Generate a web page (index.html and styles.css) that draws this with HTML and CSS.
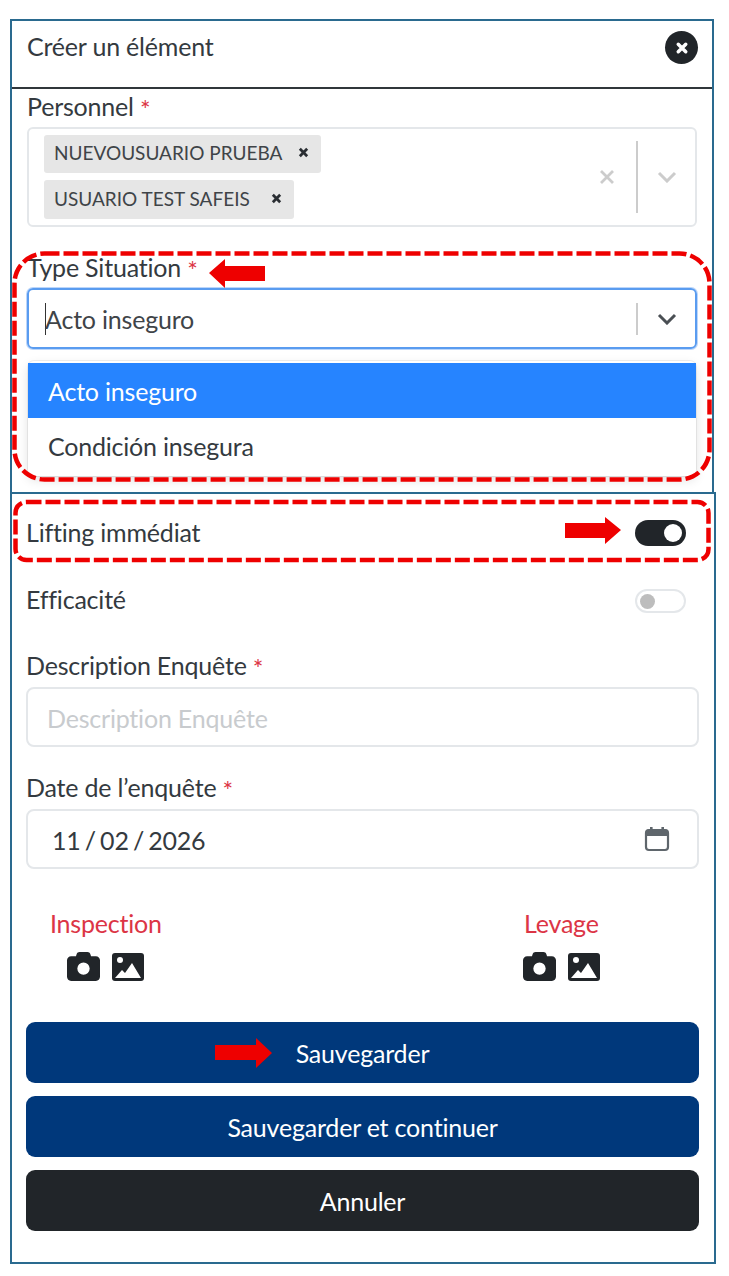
FILE: index.html
```html
<!DOCTYPE html>
<html lang="fr">
<head>
<meta charset="utf-8">
<title>Créer un élément</title>
<link rel="stylesheet" href="styles.css">
</head>
<body>
<div class="page">
  <section class="panel-top">
    <header class="modal-head">
      <h1 class="modal-title">Créer un élément</h1>
      <span class="close-btn"><svg viewBox="0 0 16 16" class="close-x"><path d="M5 5l6 6M11 5l-6 6"/></svg></span>
    </header>
    <label class="label label-first">Personnel <span class="req">*</span></label>
    <div class="multi">
      <div class="chips">
        <span class="chip">NUEVOUSUARIO PRUEBA <svg viewBox="0 0 12 12" class="chip-x"><path d="M2 2l8 8M10 2l-8 8"/></svg></span>
        <span class="chip chip-second">USUARIO TEST SAFEIS <svg viewBox="0 0 12 12" class="chip-x"><path d="M2 2l8 8M10 2l-8 8"/></svg></span>
      </div>
      <svg viewBox="0 0 16 16" class="clear-x"><path d="M2 2l12 12M14 2L2 14"/></svg>
      <span class="sep sep-tall"></span>
      <svg viewBox="0 0 20 12" class="chev chev-light"><path d="M2 2l8 8 8-8"/></svg>
    </div>
    <label class="label label-type">Type Situation <span class="req">*</span></label>
    <div class="select-focus">
      <span class="caret"></span><span class="select-value">Acto inseguro</span>
      <span class="sep sep-short"></span>
      <svg viewBox="0 0 20 12" class="chev chev-dark"><path d="M2 2l8 8 8-8"/></svg>
    </div>
    <div class="menu">
      <div class="opt opt-active">Acto inseguro</div>
      <div class="opt">Condición insegura</div>
    </div>
  </section>

  <section class="panel-bottom">
    <div class="switch-row switch-row-first">
      <span class="switch-label">Lifting immédiat</span>
      <span class="switch switch-on"><span class="knob knob-on"></span></span>
    </div>
    <div class="switch-row switch-row-second">
      <span class="switch-label">Efficacité</span>
      <span class="switch switch-off"><span class="knob knob-off"></span></span>
    </div>
    <label class="label label-desc">Description Enquête <span class="req">*</span></label>
    <div class="input"><span class="placeholder">Description Enquête</span></div>
    <label class="label label-date">Date de l’enquête <span class="req">*</span></label>
    <div class="input input-date">
      <span class="date-value">11 / 02 / 2026</span>
      <svg viewBox="0 0 26 26" class="cal">
        <rect x="2" y="4" width="22" height="20" rx="3" fill="none" stroke="#5f666c" stroke-width="2.2"/>
        <path d="M2 5.5a2 2 0 0 1 2-2h18a2 2 0 0 1 2 2V10H2z" fill="#5f666c"/>
        <rect x="6" y="1" width="2.6" height="5" fill="#5f666c"/>
        <rect x="17.4" y="1" width="2.6" height="5" fill="#5f666c"/>
      </svg>
    </div>
    <div class="uploads">
      <div class="upload upload-left">
        <div class="upload-title">Inspection</div>
        <div class="upload-icons upload-icons-left">
          <svg viewBox="0 0 512 512" class="ico-cam"><path d="M149.1 64.8L138.7 96H64C28.7 96 0 124.7 0 160V416c0 35.3 28.7 64 64 64H448c35.3 0 64-28.7 64-64V160c0-35.3-28.7-64-64-64H373.3L362.9 64.8C356.4 45.2 338.1 32 317.4 32H194.6c-20.7 0-39 13.2-45.5 32.8zM256 192a96 96 0 1 1 0 192 96 96 0 1 1 0-192z"/></svg>
          <svg viewBox="0 0 32 28" class="ico-img"><rect width="32" height="28" rx="3" fill="#212529"/><circle cx="8" cy="7" r="3" fill="#fff"/><path d="M3 25l7-8 3 3 7-10 9 15z" fill="#fff"/></svg>
        </div>
      </div>
      <div class="upload upload-right">
        <div class="upload-title">Levage</div>
        <div class="upload-icons upload-icons-right">
          <svg viewBox="0 0 512 512" class="ico-cam"><path d="M149.1 64.8L138.7 96H64C28.7 96 0 124.7 0 160V416c0 35.3 28.7 64 64 64H448c35.3 0 64-28.7 64-64V160c0-35.3-28.7-64-64-64H373.3L362.9 64.8C356.4 45.2 338.1 32 317.4 32H194.6c-20.7 0-39 13.2-45.5 32.8zM256 192a96 96 0 1 1 0 192 96 96 0 1 1 0-192z"/></svg>
          <svg viewBox="0 0 32 28" class="ico-img"><rect width="32" height="28" rx="3" fill="#212529"/><circle cx="8" cy="7" r="3" fill="#fff"/><path d="M3 25l7-8 3 3 7-10 9 15z" fill="#fff"/></svg>
        </div>
      </div>
    </div>
    <div class="actions">
      <button class="btn btn-primary">Sauvegarder</button>
      <button class="btn btn-primary">Sauvegarder et continuer</button>
      <button class="btn btn-dark">Annuler</button>
    </div>
  </section>

  <svg class="annot" viewBox="0 0 729 1276">
    <rect class="dash" x="14.5" y="253.5" width="695" height="226" rx="30"/>
    <rect class="dash" x="15.5" y="502" width="693" height="58" rx="11"/>
    <polygon class="arrow" points="265,266 225,266 225,259 209,273 225,288 225,281 265,281"/>
    <polygon class="arrow" points="565,523 605,523 605,517 621,530 605,544 605,538 565,538"/>
    <polygon class="arrow" points="215,1045 256,1045 256,1038 272,1053 256,1068 256,1060 215,1060"/>
  </svg>
</div>
</body>
</html>
```
FILE: styles.css
```css
* { box-sizing: border-box; }
html, body { margin: 0; padding: 0; background: #fff; }
body {
  font-family: "Lato", "Noto Sans", sans-serif;
  color: #343a40;
  font-size: 25px;
  letter-spacing: -0.2px;
}
.page { position: relative; width: 729px; height: 1276px; padding: 19px 0 0 10px; overflow: hidden; }
.panel-top {
  width: 704px; height: 473px;
  border: 2px solid #2a6a8f; border-bottom: 0;
  padding: 0 15px;
}
.modal-head {
  display: flex; justify-content: space-between; align-items: flex-start;
  height: 68px; margin: 0 -15px; padding: 9px 15px 0;
  border-bottom: 2px solid #30363a;
}
.modal-title { margin: 0; font-size: 25px; font-weight: 400; line-height: 32px; color: #343a40; }
.close-btn {
  width: 33px; height: 33px; margin-top: 1px; border-radius: 50%; background: #212529;
  display: flex; align-items: center; justify-content: center; margin-right: -1px;
}
.close-x { width: 20px; height: 20px; fill: none; stroke: #fff; stroke-width: 2.8; stroke-linecap: round; }
.label { display: block; font-size: 25px; line-height: 34px; color: #343a40; }
.label-first { height: 38px; }
.label-type { height: 61px; padding-top: 23px; }
.label-desc { height: 39px; margin-top: 35px; }
.label-date { height: 40px; margin-top: 22px; padding-top: 1px; }
.req { color: #dc3545; font-size: 25px; line-height: 20px; vertical-align: -3px; }
.multi {
  height: 100px; display: flex; align-items: center;
  border: 2px solid #e4e7ea; border-radius: 6px;
  padding: 0 0 0 15px;
}
.chips { flex: 1; display: flex; flex-direction: column; align-items: flex-start; gap: 7px; }
.chip {
  display: flex; align-items: center; justify-content: space-between;
  height: 38px; padding: 0 12px 3px 10px; gap: 16px;
  background: #e6e6e6; border-radius: 3px;
  font-size: 19px; letter-spacing: 0; color: #3f4448;
}
.chip-second { height: 39px; gap: 21px; }
.chip-x { width: 11px; height: 11px; fill: none; stroke: #2a2e33; stroke-width: 3; }
.clear-x { width: 16px; height: 16px; fill: none; stroke: #cccccc; stroke-width: 2.8; margin-right: 21px; }
.sep { width: 2px; background: #cccccc; display: block; }
.sep-tall { height: 72px; }
.sep-short { height: 32px; }
.chev { width: 20px; height: 12px; fill: none; stroke-width: 3; margin: 0 18px 0 19px; }
.chev-light { stroke: #cccccc; }
.chev-dark { stroke: #4a4f54; }
.select-focus {
  height: 61px; display: flex; align-items: center; padding-left: 16px;
  border: 2px solid #5a9cf0; border-radius: 6px;
  box-shadow: 0 0 0 1px #bcd6fa;
}
.caret { width: 1px; height: 32px; background: #333; margin-right: -1px; }
.select-value { flex: 1; color: #3f4448; }
.menu {
  margin: 12px 1px 0; height: 115px; padding: 2px 0;
  background: #fff; border-radius: 6px;
  box-shadow: 0 0 0 1px rgba(0,0,0,.06), 0 4px 11px rgba(0,0,0,.12);
}
.opt { height: 55px; display: flex; align-items: center; padding-left: 20px; color: #343a40; }
.opt-active { background: #2684ff; color: #fff; }
.panel-bottom {
  width: 706px; height: 772px;
  border: 2px solid #2a6a8f;
  margin-top: 0; padding: 0 15px 0 14px;
}
.switch-row { display: flex; align-items: center; justify-content: space-between; padding-right: 13px; }
.switch-row-first { height: 26px; margin-top: 26px; }
.switch-row-second { height: 24px; margin-top: 43px; }
.switch-label { font-size: 25px; line-height: 26px; color: #343a40; margin-top: -2px; }
.switch-row-second .switch-label { margin-top: -4px; }
.switch { display: flex; align-items: center; width: 51px; border-radius: 13px; }
.switch-on { height: 26px; background: #212529; justify-content: flex-end; padding-right: 4px; }
.switch-off { height: 24px; border: 2px solid #e4e7ea; padding-left: 3px; }
.knob { border-radius: 50%; display: block; }
.knob-on { width: 18px; height: 18px; background: #fff; }
.knob-off { width: 15px; height: 15px; background: #bdbdbd; }
.input {
  height: 60px; display: flex; align-items: center;
  border: 2px solid #e4e7ea; border-radius: 8px; padding-left: 19px;
}
.placeholder { color: #c8cbce; padding-top: 2px; }
.input-date { justify-content: space-between; padding: 0 27px 0 24px; }
.date-value { color: #343a40; word-spacing: -2px; padding-top: 2px; }
.cal { width: 26px; height: 26px; }
.uploads { display: flex; justify-content: space-between; margin-top: 37px; height: 116px; }
.upload-left { margin-left: 24px; }
.upload-right { margin-right: 99px; }
.upload-title { color: #dc3545; font-size: 25px; line-height: 34px; }
.upload-icons { display: flex; gap: 12px; align-items: center; margin-top: 10px; }
.upload-icons-left { margin-left: 17px; }
.upload-icons-right { margin-left: -1px; }
.ico-cam { width: 33px; height: 33px; fill: #212529; }
.ico-img { width: 32px; height: 28px; }
.actions { display: flex; flex-direction: column; gap: 13px; }
.btn {
  height: 61px; border: 0; border-radius: 9px; width: 100%;
  font: inherit; font-size: 25px; letter-spacing: inherit; color: #fff; cursor: pointer;
}
.btn-primary { background: #00387b; }
.btn-dark { background: #212529; }
.annot { position: absolute; left: 0; top: 0; width: 729px; height: 1276px; pointer-events: none; }
.dash { fill: none; stroke: #ee0000; stroke-width: 4.5; stroke-dasharray: 15 4; }
.arrow { fill: #ee0000; }
```
